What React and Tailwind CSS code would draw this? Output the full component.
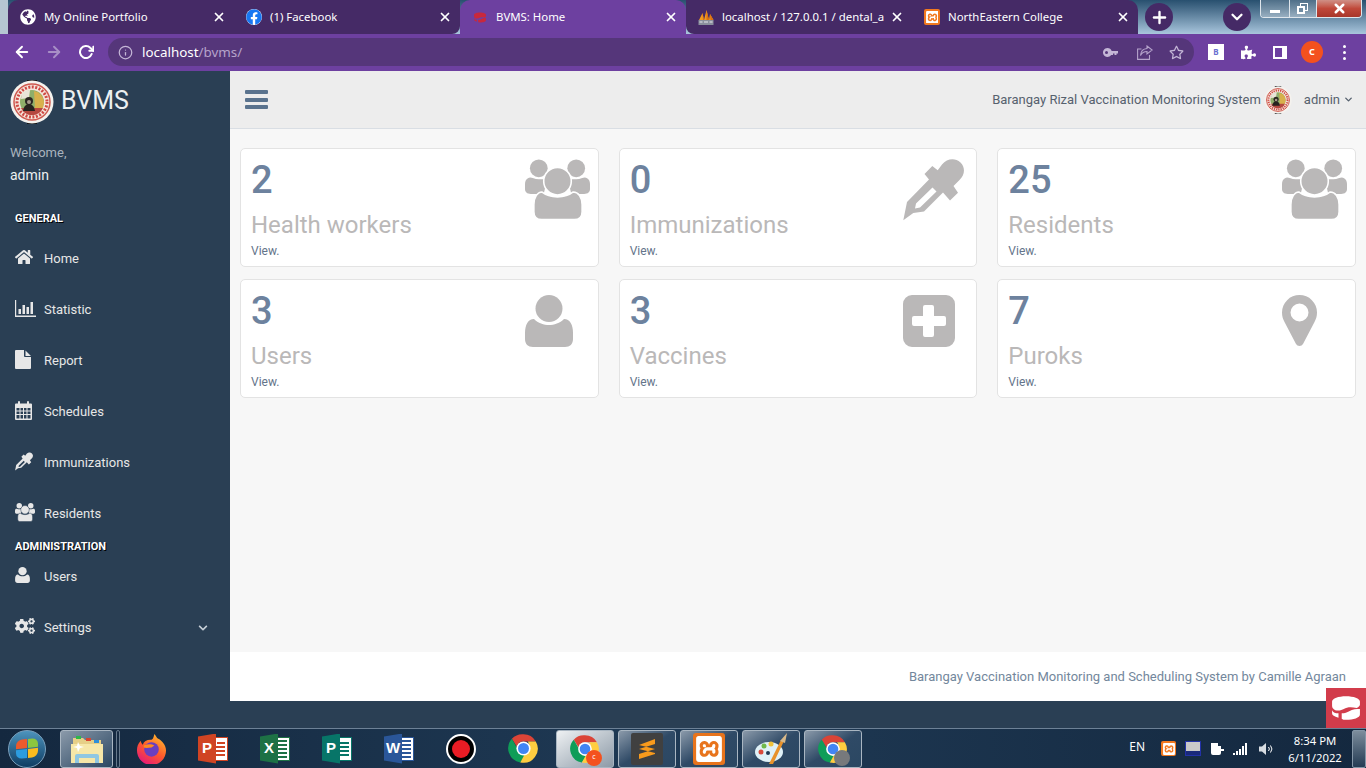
import React from 'react';
import {
  FaHome,
  FaCogs,
  FaChevronDown,
  FaGlobeAmericas,
  FaFacebook,
  FaRegStar,
  FaPuzzlePiece,
} from 'react-icons/fa';
import { FiArrowLeft, FiArrowRight, FiRotateCw, FiInfo, FiX, FiPlus, FiChevronDown } from 'react-icons/fi';
import { SiXampp } from 'react-icons/si';

const tabs = [
  { title: 'My Online Portfolio', icon: <FaGlobeAmericas className='text-white' size={16} /> },
  { title: '(1) Facebook', icon: <span className='flex h-4 w-4 items-center justify-center rounded-full bg-white'><FaFacebook className='text-[#1877f2]' size={16} /></span> },
  { title: 'BVMS: Home', icon: <CakeIcon className='h-[11px] w-[14px] text-[#c8283c]' />, active: true },
  { title: 'localhost / 127.0.0.1 / dental_a', icon: <SailIcon /> },
  { title: 'NorthEastern College', icon: <XamppBadge size={16} /> },
];

const stats = [
  { count: '2', title: 'Health workers', icon: <GroupIcon className='mt-[10px] h-[62px] w-[65px]' /> },
  { count: '0', title: 'Immunizations', icon: <DropperIcon className='mt-[10px] h-[62px] w-[61px]' /> },
  { count: '25', title: 'Residents', icon: <GroupIcon className='mt-[10px] h-[62px] w-[65px]' /> },
  { count: '3', title: 'Users', icon: <PersonIcon className='mt-[15px] h-[52px] w-[48px]' /> },
  { count: '3', title: 'Vaccines', icon: <PlusSquareIcon className='mt-[15px] h-[52px] w-[52px]' /> },
  { count: '7', title: 'Puroks', icon: <MarkerIcon className='mt-[15px] h-[52px] w-[35px]' /> },
];

const generalMenu = [
  { label: 'Home', icon: <FaHome size={18} /> },
  { label: 'Statistic', icon: <BarsIcon /> },
  { label: 'Report', icon: <FileIcon /> },
  { label: 'Schedules', icon: <CalendarIcon /> },
  { label: 'Immunizations', icon: <DropperIcon className='h-[19px] w-[18px]' /> },
  { label: 'Residents', icon: <GroupIcon gap='#2a3f54' className='h-[19px] w-[20px]' /> },
];

function CakeIcon({ className }) {
  return (
    <svg viewBox='0 0 28 24' className={className} fill='currentColor'>
      <path d='M14 1c7 0 13 2 13 5v3c0 1-1 2-3 3-5-1-9-1-12 1-2 1-5 2-8 1-2-1-3-2-3-4V6c0-3 6-5 13-5z' />
      <path d='M27 13v5c0 3-6 5-13 5-2 0-3 0-4-1v-5c3 0 5-1 7-2 3-2 7-2 10-2zM1 14c1 2 3 3 6 3v4c-4-1-6-2-6-4z' />
    </svg>
  );
}

function SailIcon() {
  return (
    <svg viewBox='0 0 16 17' className='h-[17px] w-4'>
      <path d='M1 11 4.500 4 6 11zM6 11 8.500 1 11 11zM11 11l1-6 3.500 6z' fill='#f29a1f' />
      <path d='M4.500 4 5 11H6zM8.500 1 8.500 11H11zM12 5 12.500 11H15.500z' fill='#d96f12' />
      <rect x='0.500' y='11' width='15' height='5' fill='#8a8f9c' />
      <path d='M1.500 13h3M6 13h4M11.500 13h3' stroke='#e6e8ee' strokeWidth='1' />
    </svg>
  );
}

function XamppBadge({ size = 16 }) {
  return (
    <span className='flex items-center justify-center rounded-[2px] bg-[#f2791f]' style={{ width: size, height: size }}>
      <SiXampp className='text-white' size={size * 0.8} />
    </span>
  );
}

function GroupIcon({ className, gap = '#ffffff' }) {
  return (
    <svg viewBox='0 0 66 62' className={className} fill='currentColor'>
      <circle cx='14' cy='9' r='9' />
      <circle cx='52' cy='9' r='9' />
      <path d='M3 19c3-2 5 1 11 1s6 0 8 2l-3 13H6c-4 0-6-2-6-5v-5c0-3 1-5 3-6z' />
      <path d='M63 19c-3-2-5 1-11 1s-6 0-8 2l3 13h13c4 0 6-2 6-5v-5c0-3-1-5-3-6z' />
      <path d='M17 33c5 4 11 5 16 5s11-1 16-5c5 0 9 5 9 13v7c0 5-3 8-8 8H17c-5 0-8-3-8-8v-7c0-8 4-13 8-13z' stroke={gap} strokeWidth='1.6' />
      <circle cx='33' cy='22' r='14' stroke={gap} strokeWidth='1.6' />
    </svg>
  );
}

function PersonIcon({ className }) {
  return (
    <svg viewBox='0 0 48 52' className={className} fill='currentColor'>
      <circle cx='24' cy='13.5' r='13.5' />
      <path d='M9 24c4 4 10 6 15 6s11-2 15-6c6 0 9 6 9 14v6c0 5-3 8-8 8H8c-5 0-8-3-8-8v-6c0-8 3-14 9-14z' />
    </svg>
  );
}

function DropperIcon({ className }) {
  return (
    <svg viewBox='0 0 61 62' className={className} fill='currentColor'>
      <path
        fillRule='evenodd'
        d='M0.300 61.300 4 43 26 20.500 21.500 15 29.300 7 34.700 11.300 39 5.500C44-0.500 52-1.500 57.500 3.500 62.500 8.500 62 16 56.500 21L50.500 27 55 33.700 47 41.500 40 33.500 21 52.500 10.300 54zM13 44.500 12 49.500 17 48.500 33.500 32.500 29.500 28.500z'
      />
    </svg>
  );
}

function PlusSquareIcon({ className }) {
  return (
    <svg viewBox='0 0 52 52' className={className} fill='currentColor'>
      <path
        fillRule='evenodd'
        d='M9 0h34a9 9 0 0 1 9 9v34a9 9 0 0 1-9 9H9a9 9 0 0 1-9-9V9a9 9 0 0 1 9-9zM22 10a2 2 0 0 0-2 2v9H11a2 2 0 0 0-2 2v6a2 2 0 0 0 2 2h9v9a2 2 0 0 0 2 2h7a2 2 0 0 0 2-2v-9h10a2 2 0 0 0 2-2v-6a2 2 0 0 0-2-2H31v-9a2 2 0 0 0-2-2z'
      />
    </svg>
  );
}

function MarkerIcon({ className }) {
  return (
    <svg viewBox='0 0 35 52' className={className} fill='currentColor'>
      <path
        fillRule='evenodd'
        d='M17.500 0A17.500 17.500 0 0 1 35 17.500c0 4-1 6.500-2.500 9.500L21 49a4 4 0 0 1-7 0L2.500 27C1 24 0 21.500 0 17.500A17.500 17.500 0 0 1 17.500 0zM17.500 8.500a9 9 0 1 0 0 18 9 9 0 0 0 0-18z'
      />
    </svg>
  );
}

function BarsIcon() {
  return (
    <svg viewBox='0 0 21 17' className='h-[17px] w-[21px]' fill='currentColor'>
      <path d='M0 0h1.200v15.500H21V17H0z' />
      <rect x='3.500' y='9' width='2.500' height='5' />
      <rect x='7.500' y='5' width='2.500' height='9' />
      <rect x='11.500' y='7' width='2.500' height='7' />
      <rect x='15.500' y='2' width='2.500' height='12' />
    </svg>
  );
}

function FileIcon() {
  return (
    <svg viewBox='0 0 16 19' className='h-[19px] w-4' fill='currentColor'>
      <path d='M1 0h8v6a1 1 0 0 0 1 1h6v11a1 1 0 0 1-1 1H1a1 1 0 0 1-1-1V1a1 1 0 0 1 1-1zM10.500 0.500 16 6h-5.500z' />
    </svg>
  );
}

function CalendarIcon() {
  return (
    <svg viewBox='0 0 17 19' className='h-[19px] w-[17px]' fill='currentColor'>
      <path
        fillRule='evenodd'
        d='M1 2.500h2V1a1 1 0 0 1 2 0v1.500h7V1a1 1 0 0 1 2 0v1.500h2a1 1 0 0 1 1 1V18a1 1 0 0 1-1 1H1a1 1 0 0 1-1-1V3.500a1 1 0 0 1 1-1zM1.500 7v2.500h3V7zm4 0v2.500h2.500V7zm3.500 0v2.500h2.500V7zm3.500 0v2.500h3V7zm-11 3.500V13h3v-2.500zm4 0V13h2.500v-2.500zm3.500 0V13h2.500v-2.500zm3.500 0V13h3v-2.500zm-11 3.500v3.500h3V14zm4 0v3.500h2.500V14zm3.500 0v3.500h2.500V14zm3.500 0v3.500h3V14z'
      />
    </svg>
  );
}

function KeyIcon() {
  return (
    <svg viewBox='0 0 15 9' className='ml-auto h-[9px] w-[15px]' fill='#c4b6d6'>
      <path
        fillRule='evenodd'
        d='M4.500 0a4.500 4.500 0 0 1 4.200 3H15v2.500h-1.500V7h-2V5.500H10V7H8.200A4.500 4.500 0 1 1 4.500 0zM3.500 3a1.500 1.500 0 1 0 0 3 1.500 1.500 0 0 0 0-3z'
      />
    </svg>
  );
}

function ShareIcon() {
  return (
    <svg viewBox='0 0 16 15' className='ml-[19px] h-[15px] w-4' fill='none' stroke='#b5a3cb' strokeWidth='1.1'>
      <path d='M4.500 4H0.600V14.400H12.500V10' />
      <path d='M10 1 15.200 5 10 9V6.500C7 6.500 5 7.500 3.500 10.500 3.800 6.500 6 3.800 10 3.500z' />
    </svg>
  );
}

function Seal({ className }) {
  return (
    <svg viewBox='0 0 44 44' className={className}>
      <rect x='17' y='0' width='10' height='44' fill='#111' />
      <circle cx='22' cy='22' r='21.500' fill='#f4f2ee' />
      <circle cx='22' cy='22' r='18' fill='#f6e6dc' stroke='#cf5a50' strokeWidth='1.5' />
      <circle cx='22' cy='22' r='15' fill='none' stroke='#cf4a44' strokeWidth='3' strokeDasharray='2 1.500' />
      <circle cx='22' cy='22' r='12' fill='#8fae6a' />
      <path d='M24 11a12 12 0 0 1 10 11l-1 6-8 1z' fill='#d8b04c' />
      <path d='M12 13a12 12 0 0 1 8-3l-1 8-8 1z' fill='#e8e4d8' />
      <path d='M11 28a12 12 0 0 0 22 0z' fill='#b5473f' />
      <circle cx='19' cy='21' r='4' fill='#2b2622' />
      <path d='M13 31c1-5 3-7 6-7s5 2 6 7z' fill='#26221f' />
      <circle cx='19' cy='22' r='2' fill='#a79a8c' />
    </svg>
  );
}

function ChromeLogo({ className }) {
  return (
    <svg viewBox='0 0 48 48' className={className}>
      <path d='M24 2a22 22 0 0 1 19 11H24a11 11 0 0 0-10.500 8L6 9A22 22 0 0 1 24 2z' fill='#db4437' />
      <path d='M6 9l9.500 16.500a11 11 0 0 0 12 8.500L19 45.500A22 22 0 0 1 6 9z' fill='#0f9d58' />
      <path d='M43 13a22 22 0 0 1-24 32.500l9-16.500a11 11 0 0 0 2.500-16z' fill='#ffcd40' />
      <circle cx='24' cy='24' r='11' fill='#fff' />
      <circle cx='24' cy='24' r='8.500' fill='#4285f4' />
    </svg>
  );
}

function FirefoxLogo() {
  return (
    <svg viewBox='0 0 32 32' className='h-[31px] w-[31px]'>
      <defs>
        <linearGradient id='fx' x1='0.8' y1='0' x2='0.2' y2='1'>
          <stop offset='0' stopColor='#ffbd2e' />
          <stop offset='0.5' stopColor='#ff5a2b' />
          <stop offset='1' stopColor='#e3147f' />
        </linearGradient>
      </defs>
      <path d='M19 1c2 2 2 4 4 5 4 2 8 7 8 12a15 15 0 0 1-30 0c0-4 1-7 4-10 0 2 1 3 2 4 1-3 4-5 8-5 3 0 3-3 4-6z' fill='url(#fx)' />
      <circle cx='16' cy='17' r='7.500' fill='#6a3fc0' />
      <path d='M8 13c4-2 8-2 11 0l-3 2c-3 0-5 1-8 0z' fill='#ff8a1f' />
    </svg>
  );
}

function OfficeLogo({ letter, dark, page }) {
  return (
    <div className='relative h-[30px] w-[30px]'>
      <div className='absolute top-[3px] right-0 flex h-[24px] w-[22px] flex-col items-end justify-center gap-[2px] border bg-white pr-[2px]' style={{ borderColor: dark }}>
        {page.map((w, i) => (
          <div key={i} className='h-[2px]' style={{ width: w, backgroundColor: dark }} />
        ))}
      </div>
      <div
        className='absolute top-0 left-0 flex h-[30px] w-[18px] items-center justify-center text-[15px] font-bold text-white [font-family:"Liberation_Sans",sans-serif] [clip-path:polygon(0_10%,100%_0,100%_100%,0_90%)]'
        style={{ backgroundColor: dark }}
      >
        {letter}
      </div>
    </div>
  );
}

function WindowsOrb() {
  return (
    <div className='flex h-[38px] w-[38px] items-center justify-center rounded-full border border-[#7aa0bd] bg-linear-to-b from-[#4d94bd] to-[#0f3d63]'>
      <div className='grid h-[19px] w-[22px] -skew-y-6 grid-cols-2 gap-[1px]'>
        <div className='rounded-tl-md bg-[#ec5a2c]' />
        <div className='rounded-tr-md bg-[#8cc63f]' />
        <div className='rounded-bl-md bg-[#2c9ce0]' />
        <div className='rounded-br-md bg-[#fbbc1f]' />
      </div>
    </div>
  );
}

function ExplorerFolder() {
  return (
    <svg viewBox='0 0 32 30' className='h-[30px] w-8'>
      <path d='M2 4h10l2 2h16v22H2z' fill='#e6cf87' />
      <rect x='5' y='2' width='5' height='3' fill='#2fb84a' />
      <rect x='15' y='4' width='5' height='3' fill='#d9442f' />
      <rect x='23' y='6' width='5' height='3' fill='#2f8fd9' />
      <path d='M0 10h32v19H0z' fill='#f6e7a8' />
      <path d='M4 29v-7a2 2 0 0 1 2-2h20a2 2 0 0 1 2 2v7h-4v-5H8v5z' fill='#8fc7e2' />
      <path d='M7 8l2 4 4 1-4 1-2 4-1-4-4-1 4-1z' fill='#fff' />
    </svg>
  );
}

function TaskButton({ active, children }) {
  return (
    <div className={`relative flex h-[38px] w-[58px] items-center justify-center rounded-[3px] border border-[#a9b6c2] ${active ? 'bg-linear-to-br from-[#eef1f3] to-[#8d9aa7]' : 'bg-linear-to-br from-[#8b9aaa] via-[#2f4a66] to-[#2b4762]'}`}>
      {children}
    </div>
  );
}

function ChromeTabs() {
  return (
    <div className='flex h-[34px] bg-linear-to-b from-[#28506f] to-[#a9c6dd]'>
      <div className='w-2 bg-[#b5c6d2]' />
      {tabs.map((tab, i) => (
        <div
          key={tab.title}
          className={`flex w-[226px] items-center text-[11.4px] text-white ${tab.active ? 'rounded-t-[10px] bg-[#6d40a0]' : 'bg-[#452a66]'} ${i === 0 ? 'rounded-tl-[10px]' : ''} ${i === 1 ? 'rounded-br-[8px]' : ''} ${i === 3 ? 'rounded-bl-[8px]' : ''} ${i === 4 ? 'rounded-tr-[10px]' : ''}`}
        >
          <span className='flex w-9 shrink-0 justify-center pl-1'>{tab.icon}</span>
          <span className='min-w-0 flex-1 whitespace-nowrap'>{tab.title}</span>
          <span className='flex w-[30px] shrink-0 justify-center'>
            <FiX size={14} strokeWidth={3} />
          </span>
        </div>
      ))}
      <div className='mt-[3px] ml-[7px] flex h-7 w-7 items-center justify-center rounded-full bg-[#452a66] text-white'>
        <FiPlus size={19} strokeWidth={3} />
      </div>
      <div className='mt-[3px] ml-[50px] flex h-7 w-7 items-center justify-center rounded-full bg-[#452a66] text-white'>
        <FiChevronDown size={18} strokeWidth={3} />
      </div>
      <div className='ml-[9px] flex h-[18px] w-[102px] overflow-hidden rounded-b-[4px] border border-t-0 border-[#dfe6ec] text-white'>
        <div className='flex w-[29px] items-end justify-center border-r border-[#dfe6ec] bg-linear-to-b from-[#4f6f88] to-[#98afc1] pb-1'>
          <div className='h-[3px] w-[10px] bg-white' />
        </div>
        <div className='relative flex w-[27px] items-center justify-center border-r border-[#dfe6ec] bg-linear-to-b from-[#4f6f88] to-[#98afc1]'>
          <div className='absolute top-[3px] left-[10px] h-[8px] w-[8px] border border-white' />
          <div className='absolute top-[6px] left-[7px] h-[8px] w-[8px] border-2 border-white bg-[#6f8ca3]' />
        </div>
        <div className='flex flex-1 items-center justify-center bg-linear-to-b from-[#cf8f86] via-[#c0483a] to-[#a8362a]'>
          <FiX size={15} strokeWidth={4} />
        </div>
      </div>
    </div>
  );
}

function ChromeToolbar() {
  return (
    <div className='flex h-[37px] items-start bg-[#6d40a0] pt-1 pl-[6px] text-white'>
      <div className='flex h-7 w-8 items-center justify-center'><FiArrowLeft size={18} strokeWidth={2.5} /></div>
      <div className='flex h-7 w-8 items-center justify-center text-[#a88fc6]'><FiArrowRight size={18} strokeWidth={2.5} /></div>
      <div className='flex h-7 w-8 items-center justify-center'><FiRotateCw size={16} strokeWidth={3} /></div>
      <div className='ml-[6px] flex h-7 w-[1086px] items-center rounded-full bg-[#55367a]'>
        <FiInfo className='ml-[10px] text-[#c4b6d6]' size={15} />
        <span className='ml-[9px] text-[13.4px] [font-family:"Noto_Sans",sans-serif]'>
          localhost<span className='text-[#b5a3cb]'>/bvms/</span>
        </span>
        <KeyIcon />
        <ShareIcon />
        <FaRegStar className='mr-[10px] ml-[16px] text-[#c4b6d6]' size={15} />
      </div>
      <div className='ml-[6px] flex h-7 w-8 items-center justify-center'>
        <span className='flex h-4 w-4 items-center justify-center bg-white text-[8px] font-bold text-[#6a6fd0]'>B</span>
      </div>
      <div className='flex h-7 w-8 items-center justify-center'><FaPuzzlePiece size={15} /></div>
      <div className='flex h-7 w-8 items-center justify-center'>
        <div className='h-[13px] w-[14px] border-2 border-r-[5px] border-white' />
      </div>
      <div className='flex h-7 w-8 items-center justify-center'>
        <span className='flex h-[22px] w-[22px] items-center justify-center rounded-full bg-[#f4511e] text-[9px] font-bold'>C</span>
      </div>
      <div className='flex h-7 w-8 flex-col items-center justify-center gap-[3px]'>
        <div className='h-[3px] w-[3px] rounded-full bg-white' />
        <div className='h-[3px] w-[3px] rounded-full bg-white' />
        <div className='h-[3px] w-[3px] rounded-full bg-white' />
      </div>
    </div>
  );
}

function MenuRow({ label, icon, chevron }) {
  return (
    <div className='flex h-[51px] items-center pr-[22px] pl-[15px] text-[13px] text-[#e7e7e7]'>
      <span className='-mt-[3px] flex w-[29px] shrink-0 items-center'>{icon}</span>
      <span>{label}</span>
      {chevron && <FaChevronDown className='ml-auto text-[#c5ced6]' size={10} />}
    </div>
  );
}

function SectionTitle({ children, className = '' }) {
  return (
    <h3 className={`flex h-[15px] items-center pl-[15px] text-[11px] font-bold text-white [text-shadow:1px_1px_#000] ${className}`}>
      {children}
    </h3>
  );
}

function Sidebar() {
  return (
    <aside className='w-[230px] shrink-0'>
      <div className='flex h-[60px] items-center pl-[10px]'>
        <Seal className='mt-[2px] h-[44px] w-[44px]' />
        <span className='ml-[7px] text-[25px] text-[#ecf0f1]'>BVMS</span>
      </div>
      <div className='mt-[13px] pl-[10px]'>
        <p className='text-[13px] leading-[18px] text-[#a9b3bd]'>Welcome,</p>
        <p className='mt-1 text-[14px] leading-[18px] text-[#ecf0f1]'>admin</p>
      </div>
      <SectionTitle className='mt-[28px] mb-[6px]'>GENERAL</SectionTitle>
      <div>
        {generalMenu.map((item) => (
          <MenuRow key={item.label} label={item.label} icon={item.icon} />
        ))}
      </div>
      <SectionTitle className='mt-[1px] -mb-[4px]'>ADMINISTRATION</SectionTitle>
      <MenuRow label='Users' icon={<PersonIcon className='h-[16px] w-[15px]' />} />
      <MenuRow label='Settings' icon={<FaCogs size={20} />} chevron />
    </aside>
  );
}

function StatCard({ count, title, icon }) {
  return (
    <div className='flex h-[119px] justify-between rounded-[5px] border border-[#e3e3e3] bg-white pr-[7px] pl-[10px]'>
      <div className='pt-[10px]'>
        <div className='h-[42px] text-[38px] leading-[42px] font-medium text-[#6d829e]'>{count}</div>
        <div className='mt-[9px] text-[24px] leading-[30px] text-[#bab8b8]'>{title}</div>
        <div className='mt-[3px] text-[12px] leading-[16px] text-[#64748a]'>View.</div>
      </div>
      <div className='w-[66px] shrink-0 text-[#bab8b8]'>{icon}</div>
    </div>
  );
}

function Dashboard() {
  return (
    <main className='flex min-w-0 flex-1 flex-col'>
      <header className='flex h-[58px] items-center border-b border-[#d9dee4] bg-[#ededed] pr-[12px] pl-[15px] text-[13px] text-[#56616e]'>
        <div className='flex h-[19px] w-[23px] flex-col justify-between'>
          <div className='h-1 rounded-[1px] bg-[#5a738e]' />
          <div className='h-1 rounded-[1px] bg-[#5a738e]' />
          <div className='h-1 rounded-[1px] bg-[#5a738e]' />
        </div>
        <span className='ml-auto'>Barangay Rizal Vaccination Monitoring System</span>
        <Seal className='ml-[3px] h-[28px] w-[28px]' />
        <span className='ml-[12px]'>admin</span>
        <FiChevronDown className='ml-[3px]' size={11} strokeWidth={3} />
      </header>
      <section className='flex-1 bg-[#f7f7f7] px-[10px] pt-[19px]'>
        <div className='grid grid-cols-3 gap-x-[20px] gap-y-[12px]'>
          {stats.map((s) => (
            <StatCard key={s.title} count={s.count} title={s.title} icon={s.icon} />
          ))}
        </div>
      </section>
      <footer className='flex h-[49px] items-center justify-end bg-white pr-[20px] text-[13px] text-[#73879c]'>
        Barangay Vaccination Monitoring and Scheduling System by Camille Agraan
      </footer>
      <div className='h-[27px]' />
    </main>
  );
}

function Taskbar() {
  return (
    <div className='flex h-[40px] items-center border-t border-[#6d8196] bg-linear-to-r from-[#14283f] via-[#1f3a55] to-[#14283f] text-white [font-family:"Noto_Sans",sans-serif]'>
      <div className='flex w-[60px] pl-[8px]'><WindowsOrb /></div>
      <div className='flex h-[38px] w-[53px] items-center justify-center rounded-[3px] border border-[#a9b6c2] bg-linear-to-br from-[#8b9aaa] to-[#2b4762]'>
        <ExplorerFolder />
      </div>
      <div className='ml-[3px] h-[38px] w-[4px] rounded-[2px] border border-[#66798c]' />
      <div className='flex w-[62px] justify-center'><FirefoxLogo /></div>
      <div className='flex w-[62px] justify-center'><OfficeLogo letter='P' dark='#d04423' page={[8, 12, 14, 14]} /></div>
      <div className='flex w-[62px] justify-center'><OfficeLogo letter='X' dark='#1d7145' page={[12, 12, 12, 12, 12]} /></div>
      <div className='flex w-[62px] justify-center'><OfficeLogo letter='P' dark='#077568' page={[10, 10, 10, 10]} /></div>
      <div className='flex w-[62px] justify-center'><OfficeLogo letter='W' dark='#2a5699' page={[12, 12, 12, 12, 12]} /></div>
      <div className='flex w-[62px] justify-center'>
        <div className='flex h-[30px] w-[30px] items-center justify-center rounded-full border-[2px] border-white bg-black'>
          <div className='h-[18px] w-[18px] rounded-full bg-[#ea1c24]' />
        </div>
      </div>
      <div className='flex w-[62px] justify-center'><ChromeLogo className='h-[31px] w-[31px]' /></div>
      <div className='ml-[2px] flex gap-[4px]'>
        <TaskButton active>
          <ChromeLogo className='h-[30px] w-[30px]' />
          <span className='absolute top-[19px] left-[29px] flex h-4 w-4 items-center justify-center rounded-full bg-[#f4511e] text-[7px]'>c</span>
        </TaskButton>
        <TaskButton>
          <div className='flex h-8 w-8 items-center justify-center rounded-[2px] bg-[#404040]'>
            <svg viewBox='0 0 16 20' className='h-[20px] w-[16px]' fill='#f89a1c'>
              <path d='M16 0v5L0 10V6zM0 10l16 4v-4L0 6zM16 10v5L0 20v-5z' />
            </svg>
          </div>
        </TaskButton>
        <TaskButton>
          <span className='flex h-8 w-8 items-center justify-center rounded-[3px] bg-[#e8741c]'>
            <SiXampp className='text-white' size={26} />
          </span>
        </TaskButton>
        <TaskButton>
          <svg viewBox='0 0 34 32' className='h-8 w-[34px]'>
            <ellipse cx='15' cy='19' rx='14' ry='10' fill='#dff1f7' />
            <circle cx='7' cy='19' r='2.500' fill='#d94a3a' />
            <circle cx='10' cy='13' r='2.500' fill='#6fb84a' />
            <circle cx='17' cy='11' r='2.500' fill='#f0c23a' />
            <circle cx='14' cy='20' r='2' fill='#1f3a55' />
            <path d='M15 31 27 7l3 1-11 23z' fill='#e8922a' />
            <path d='M26 8l7-8-2 10z' fill='#d8b98a' />
          </svg>
        </TaskButton>
        <TaskButton>
          <ChromeLogo className='h-[30px] w-[30px]' />
          <span className='absolute top-[19px] left-[29px] h-4 w-4 rounded-full bg-[#77797c]' />
        </TaskButton>
      </div>
      <div className='ml-auto flex items-center'>
        <span className='-mt-[4px] text-[12px]'>EN</span>
        <span className='ml-[16px]'><XamppBadge size={15} /></span>
        <div className='ml-[9px] flex h-[15px] w-[16px] flex-col border border-[#2332a8] bg-[#c9c9c9]'>
          <div className='mt-auto h-[4px] bg-[#1a2a7a]' />
        </div>
        <svg viewBox='0 0 14 16' className='ml-[9px] h-4 w-[14px]' fill='#fff'>
          <path d='M1 2h7v3h3v3h3v2h-3v2a2 2 0 0 1-2 2H3a2 2 0 0 1-2-2z' />
        </svg>
        <div className='ml-[9px] flex h-[13px] items-end gap-[1px]'>
          <div className='h-[2px] w-[2px] bg-white' />
          <div className='h-[4px] w-[2px] bg-white' />
          <div className='h-[6px] w-[2px] bg-white' />
          <div className='h-[9px] w-[2px] bg-white' />
          <div className='h-[12px] w-[2px] bg-white' />
        </div>
        <svg viewBox='0 0 16 16' className='ml-[11px] h-4 w-4' fill='none' stroke='#fff'>
          <path d='M1 5.500h3L8 2v12L4 10.500H1z' fill='#d8dde2' stroke='none' />
          <path d='M10.500 6a3 3 0 0 1 0 4M12.500 4.500a5.500 5.500 0 0 1 0 7' />
        </svg>
        <div className='ml-[11px] w-[60px] text-center text-[11.3px] leading-[17px] whitespace-nowrap'>
          <div>8:34 PM</div>
          <div>6/11/2022</div>
        </div>
        <div className='ml-[7px] h-[38px] w-[14px] rounded-[2px] border border-[#8496a7] bg-linear-to-b from-[#7d8d9c] to-[#253c54]' />
      </div>
    </div>
  );
}

export default function App() {
  return (
    <div className='flex h-[768px] w-[1366px] flex-col overflow-hidden [font-family:Roboto,sans-serif]'>
      <div className='[font-family:"Noto_Sans",sans-serif]'>
        <ChromeTabs />
        <ChromeToolbar />
      </div>
      <div className='relative flex h-[657px] bg-[#2a3f54]'>
        <Sidebar />
        <Dashboard />
        <div className='absolute right-0 bottom-0 flex h-10 w-10 items-center justify-center bg-[#d23c4b]'>
          <CakeIcon className='h-[26px] w-[30px] text-white' />
        </div>
      </div>
      <Taskbar />
    </div>
  );
}
